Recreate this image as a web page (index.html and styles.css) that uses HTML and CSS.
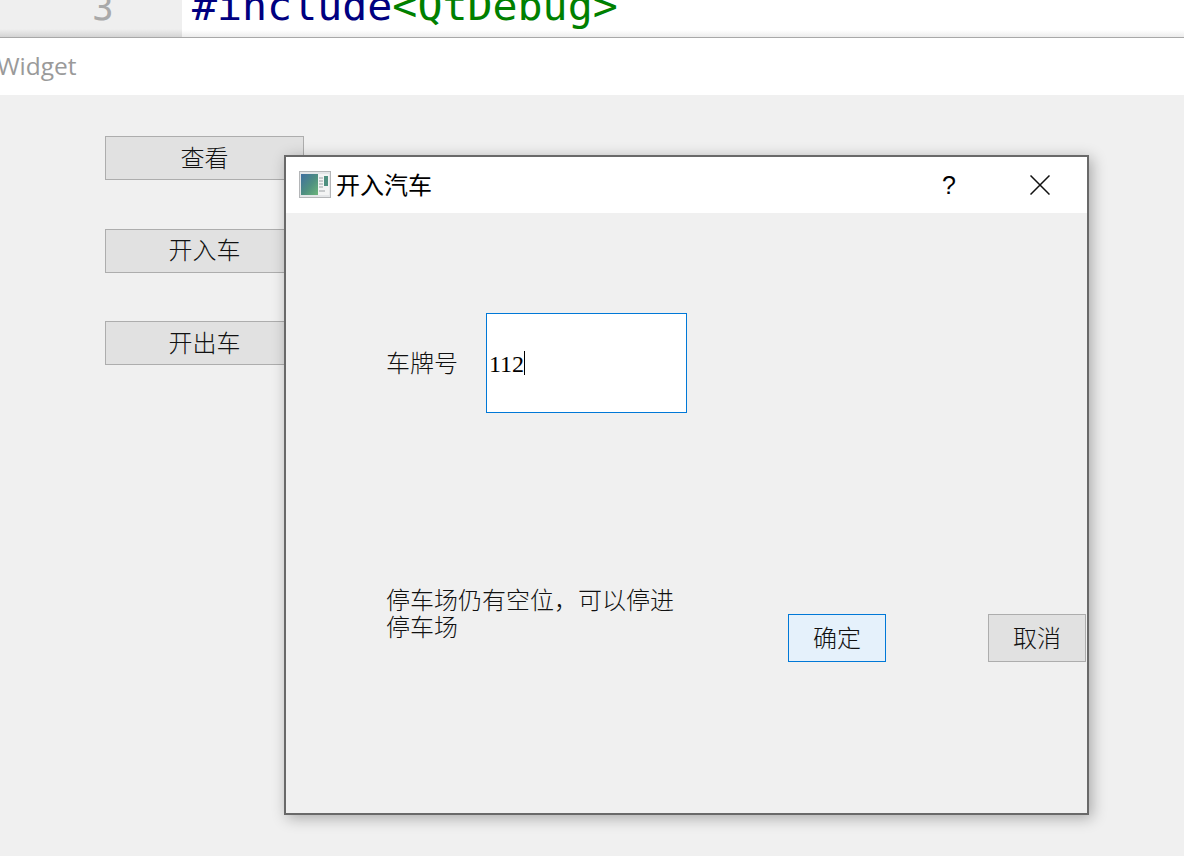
FILE: index.html
```html
<!DOCTYPE html>
<html lang="zh-CN">
<head>
    <meta charset="UTF-8">
    <title>Widget</title>
    <link rel="stylesheet" href="styles.css">
</head>
<body>
    <!-- editor strip behind the running app -->
    <div class="editor-strip">
        <div class="gutter"><span class="line-no">3</span></div>
        <div class="code"><span class="kw">#include</span><span class="str">&lt;QtDebug&gt;</span></div>
    </div>

    <div class="main-window">
        <div class="main-title">Widget</div>
        <div class="main-body">
            <button class="btn btn-main">查看</button>
            <button class="btn btn-main">开入车</button>
            <button class="btn btn-main">开出车</button>
        </div>
    </div>

    <div class="dialog">
        <div class="dialog-title">
            <svg class="dialog-icon" width="32" height="27" viewBox="0 0 32 27">
                <defs>
                    <linearGradient id="pane" x1="0" y1="0" x2="1" y2="1">
                        <stop offset="0" stop-color="#3f6fa0"/>
                        <stop offset="0.55" stop-color="#4f9080"/>
                        <stop offset="1" stop-color="#6cb57a"/>
                    </linearGradient>
                </defs>
                <rect x="0.5" y="0.5" width="31" height="26" fill="#e4e6e8" stroke="#b4b6b8"/>
                <rect x="2" y="3" width="28" height="21" fill="#f3f4f4"/>
                <rect x="2" y="3" width="17" height="21" fill="url(#pane)"/>
                <rect x="25" y="5" width="4" height="10" fill="#4f9080"/>
                <path d="M20 7h4M20 10h4M20 13h4M20 16h4M20 20h6" stroke="#b9bcbe" stroke-width="1.5"/>
            </svg>
            <span class="dialog-name">开入汽车</span>
            <span class="help-btn">?</span>
            <svg class="close-btn" width="20" height="20" viewBox="0 0 20 20">
                <path d="M0.5 0.5L19.5 19.5M19.5 0.5L0.5 19.5" stroke="#111" stroke-width="1.5" fill="none"/>
            </svg>
        </div>
        <div class="dialog-body">
            <div class="plate-row">
                <label class="plate-label">车牌号</label>
                <div class="line-edit"><span>112</span><span class="caret"></span></div>
            </div>
            <div class="bottom-row">
                <div class="message">停车场仍有空位，可以停进停车场</div>
                <div class="actions">
                    <button class="btn btn-dialog btn-focus">确定</button>
                    <button class="btn btn-dialog">取消</button>
                </div>
            </div>
        </div>
    </div>
</body>
</html>
```

FILE: styles.css
```css
html, body {
    height: 100%;
}

body {
    margin: 0;
    background-color: #f0f0f0;
    font-family: "Liberation Serif", "Noto Sans CJK SC", serif;
    font-size: 24px;
    color: #111;
    overflow: hidden;
    position: relative;
}

.editor-strip {
    display: flex;
    height: 37px;
    border-bottom: 1px solid #a8a8a8;
    background: linear-gradient(to bottom, #fff 30px, #ececec 37px);
    overflow: hidden;
}

.gutter {
    width: 182px;
    flex: none;
    height: 37px;
    background: linear-gradient(to bottom, #efefef 29px, #d4d4d4 37px);
    position: relative;
}

.line-no {
    position: absolute;
    left: 92px;
    bottom: 5px;
    font-family: "DejaVu Sans Mono", monospace;
    font-size: 36px;
    line-height: 48px;
    color: #a9a9a9;
}

.code {
    margin-left: 10px;
    margin-top: -23px;
    font-family: "DejaVu Sans Mono", monospace;
    font-size: 41.6px;
    line-height: 58px;
    white-space: pre;
}

.kw {
    color: #000080;
}

.str {
    color: #008000;
}

.main-title {
    height: 57px;
    line-height: 56px;
    background-color: #fff;
    text-indent: -3px;
    font-family: "Open Sans", sans-serif;
    font-size: 24.5px;
    color: #9a9a9a;
}

.main-body {
    display: flex;
    flex-direction: column;
    align-items: flex-start;
    gap: 48.5px;
    padding: 41px 0 0 105px;
}

.btn {
    box-sizing: border-box;
    margin: 0;
    padding: 0 0 4px;
    border: 1px solid #adadad;
    background-color: #e1e1e1;
    font-family: "Noto Sans CJK SC", sans-serif;
    font-size: 24px;
    font-weight: 300;
    color: #111;
}

.btn-main {
    width: 199px;
    height: 44px;
}

/* the dialog floats over the main window */
.dialog {
    position: absolute;
    left: 284px;
    top: 155px;
    box-sizing: border-box;
    width: 805px;
    height: 660px;
    border: 2px solid #696969;
    background-color: #f0f0f0;
    box-shadow: 3px 3px 14px rgba(0, 0, 0, 0.3);
}

.dialog-title {
    display: flex;
    align-items: center;
    height: 56px;
    background-color: #fff;
    padding-left: 13px;
}

.dialog-icon {
    flex: none;
    margin-right: 5px;
    margin-bottom: 1px;
}

.dialog-name {
    padding-bottom: 4px;
    font-family: "Noto Sans CJK SC", sans-serif;
    color: #000;
}

.help-btn {
    margin-left: auto;
    width: 24px;
    text-align: center;
    font-family: "Liberation Sans", sans-serif;
    font-size: 25px;
    color: #000;
}

.close-btn {
    flex: none;
    margin-left: 69px;
    margin-right: 37px;
}

.dialog-body {
    padding: 100px 0 0 100px;
}

.plate-row {
    display: flex;
    align-items: center;
}

.plate-label {
    width: 100px;
    flex: none;
    padding-bottom: 4px;
    font-family: "Noto Sans CJK SC", sans-serif;
    font-weight: 300;
}

.line-edit {
    box-sizing: border-box;
    width: 201px;
    height: 100px;
    display: flex;
    align-items: center;
    padding-left: 2px;
    border: 1px solid #0078d7;
    background-color: #fff;
    color: #000;
}

.line-edit span:first-child {
    padding-top: 2px;
}

.caret {
    width: 1px;
    height: 24px;
    background-color: #000;
}

.bottom-row {
    display: flex;
    margin-top: 172px;
}

.message {
    width: 290px;
    margin-right: 112px;
    line-height: 27px;
    font-family: "Noto Sans CJK SC", sans-serif;
    font-weight: 300;
}

.actions {
    display: flex;
    gap: 102px;
    margin-top: 29px;
}

.btn-dialog {
    width: 98px;
    height: 48px;
}

.btn-focus {
    border-color: #0078d7;
    background-color: #e5f1fb;
}
```
